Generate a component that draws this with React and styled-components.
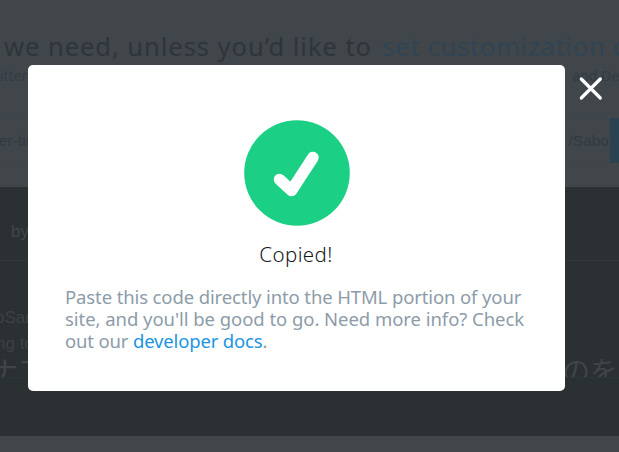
import React from "react";
import styled, { createGlobalStyle } from "styled-components";

const Global = createGlobalStyle`
  * { box-sizing: border-box; }
  body { margin: 0; background: #40464a; }
`;

const Page = styled.main`
  position: relative;
  width: 619px;
  height: 452px;
  overflow: hidden;
  display: flex;
  flex-direction: column;
  background: #40464a;
  font-family: "Noto Sans", "Noto Sans CJK JP", sans-serif;
`;

const Heading = styled.h1`
  margin: 0;
  height: 64px;
  padding: 29px 0 0 4px;
  font-size: 25.5px;
  line-height: 34px;
  font-weight: 400;
  letter-spacing: ${(p) => p.$spacing}px;
  white-space: nowrap;
  color: #2f353a;
`;

const HeadingLink = styled.span`
  margin-left: 3px;
  letter-spacing: 0.7px;
  color: #314453;
`;

const SplitRow = styled.div`
  display: flex;
  justify-content: space-between;
  align-items: center;
  height: ${(p) => p.$height}px;
  font-family: ${(p) => p.$font || "inherit"};
  font-size: ${(p) => p.$size}px;
  line-height: 1;
  color: ${(p) => p.$color};
  white-space: nowrap;
`;

const Fragment = styled.span`
  margin-left: ${(p) => p.$left || 0}px;
  margin-right: ${(p) => p.$right || 0}px;
`;

const CodeField = styled.div`
  display: flex;
  justify-content: space-between;
  align-items: center;
  height: 45px;
  margin: 30px 0 24px;
  border-top: 1px solid #3c4349;
  border-bottom: 1px solid #3c4349;
  font: 15.5px "Liberation Sans", sans-serif;
  color: #333a40;
`;

const FieldEnd = styled.div`
  display: flex;
  align-items: center;
  gap: 1px;
`;

const CopyButton = styled.div`
  width: 9px;
  height: 45px;
  background: #2b4250;
`;

const Preview = styled.section`
  height: 249px;
  padding-top: 29px;
  background: #2b3033;
`;

const Divider = styled.div`
  height: 1px;
  margin: 14px 0 43px;
  background: #303740;
`;

const Clip = styled.div`
  height: 22px;
  overflow: hidden;
  border-bottom: 1px solid #2e353b;
`;

const Dialog = styled.section`
  position: absolute;
  left: 28px;
  top: 65px;
  width: 537px;
  height: 326px;
  padding: 55px 37px 0;
  display: flex;
  flex-direction: column;
  align-items: center;
  border-radius: 5px;
  background: #fff;
`;

const SuccessIcon = styled.svg`
  display: block;
  width: 106px;
  height: 106px;
`;

const Title = styled.h2`
  margin: 15px 0 0 -1px;
  font-size: 20.5px;
  line-height: 26px;
  font-weight: 300;
  letter-spacing: 0.4px;
  color: #14181b;
`;

const Message = styled.p`
  width: 463px;
  margin: 19px 0 0;
  font-size: 18.5px;
  line-height: 22px;
  font-weight: 400;
  color: #8c9ca9;
`;

const Line = styled.span`
  display: block;
  white-space: nowrap;
  letter-spacing: ${(p) => p.$spacing}px;
`;

const DocsLink = styled.a`
  color: #1b95e0;
`;

const CloseButton = styled.button`
  position: absolute;
  left: 578px;
  top: 76px;
  width: 25px;
  height: 25px;
  padding: 0;
  border: 0;
  background: transparent;

  svg { display: block; }
`;

export default function App() {
  return (
    <>
      <Global />
      <Page>
        <Heading $spacing={0.96}>
          we need, unless you’d like to <HeadingLink>set customization options</HeadingLink>
        </Heading>
        <SplitRow $height={24} $size={14} $color="#333b46">
          <Fragment $left={0}>itter</Fragment>
          <Fragment $right={-7}>and Dev</Fragment>
        </SplitRow>
        <CodeField>
          <Fragment $left={-1}>er-timeline</Fragment>
          <FieldEnd>
            <Fragment>/Sabo</Fragment>
            <CopyButton />
          </FieldEnd>
        </CodeField>
        <Preview>
          <SplitRow $height={30} $size={17} $color="#41474a" $font='"Liberation Sans", sans-serif'>
            <Fragment $left={11}>by</Fragment>
          </SplitRow>
          <Divider />
          <SplitRow $height={26} $size={17} $color="#3c4245" $font='"Liberation Sans", sans-serif'>
            <Fragment $left={-5}>oSan</Fragment>
          </SplitRow>
          <SplitRow $height={26} $size={17} $color="#3c4245" $font='"Liberation Sans", sans-serif'>
            <Fragment $left={-4}>ng to</Fragment>
          </SplitRow>
          <Clip>
            <SplitRow $height={28} $size={28} $color="#3f4548" $font='"Noto Sans CJK JP", sans-serif'>
              <Fragment $left={-10}>ナア</Fragment>
              <Fragment $right={1}>のを</Fragment>
            </SplitRow>
          </Clip>
        </Preview>
        <Dialog role="dialog" aria-modal="true">
          <SuccessIcon viewBox="0 0 106 106">
            <circle cx="53" cy="53" r="52.8" fill="#1bd085" />
            <path d="M35.5 59.5L47.5 70.5L69 37.5" fill="none" stroke="#fff" strokeWidth="11.5" strokeLinecap="round" strokeLinejoin="round" />
          </SuccessIcon>
          <Title>Copied!</Title>
          <Message>
            <Line $spacing={-0.12}>Paste this code directly into the HTML portion of your</Line>
            <Line $spacing={-0.05}>site, and you'll be good to go. Need more info? Check</Line>
            <Line $spacing={-0.16}>out our <DocsLink>developer docs</DocsLink>.</Line>
          </Message>
        </Dialog>
        <CloseButton aria-label="Close">
          <svg width="25" height="25" viewBox="0 0 25 25">
            <path d="M3.3 3L22.3 22M22.3 3L3.3 22" fill="none" stroke="#fff" strokeWidth="3.2" strokeLinecap="round" />
          </svg>
        </CloseButton>
      </Page>
    </>
  );
}
